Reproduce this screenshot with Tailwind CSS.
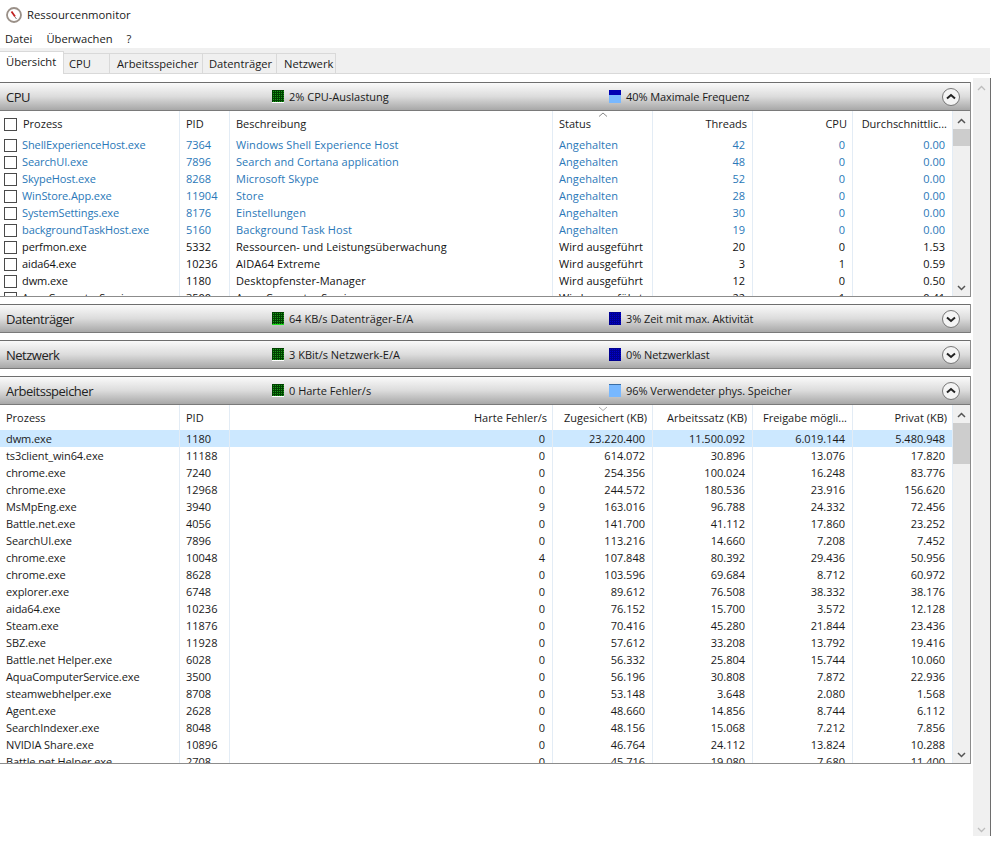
<!DOCTYPE html>
<html lang="de">
<head>
<meta charset="UTF-8">
<title>Ressourcenmonitor</title>
<script src="https://cdn.jsdelivr.net/npm/@tailwindcss/browser@4"></script>
</head>
<body class="bg-white h-[864px] w-[995px] overflow-hidden font-['Open_Sans',sans-serif] text-[11px] text-[#1a1a1a]">
  <!-- title bar -->
  <div class="h-[30px] flex items-center pl-[6px] gap-[5px] text-[11.300px]">
    <svg width="16" height="16" viewBox="0 0 16 16"><circle cx="8" cy="8" r="7" fill="#fff" stroke="#9a9088" stroke-width="1.800"/><path d="M5.500 4.500l3.500 5" stroke="#c02020" stroke-width="1.800"/><path d="M9 10l1.500 2" stroke="#777" stroke-width="1"/></svg>
    <span>Ressourcenmonitor</span>
  </div>
  <!-- menu -->
  <div class="h-[18px] flex items-center pl-[5px] gap-[14px] text-[11.200px] pt-[1px]">
    <span>Datei</span><span>Überwachen</span><span>?</span>
  </div>
  <!-- tabs -->
  <div class="h-[26px] w-[990px] bg-[#f0f0f0] flex items-end border-b border-[#d9d9d9] text-[11.200px]">
    <div class="h-[23px] w-[64px] bg-white border-r border-t border-[#d9d9d9] pl-[6px] pt-[2px] -mb-px">Übersicht</div>
    <div class="h-[20px] w-[46px] border-r border-t border-[#d9d9d9] pl-[5px] pt-[2px]">CPU</div>
    <div class="h-[20px] w-[93px] border-r border-t border-[#d9d9d9] pl-[7px] pt-[2px]">Arbeitsspeicher</div>
    <div class="h-[20px] w-[74px] border-r border-t border-[#d9d9d9] pl-[6px] pt-[2px]">Datenträger</div>
    <div class="h-[20px] w-[59px] border-r border-t border-[#d9d9d9] pl-[7px] pt-[2px]">Netzwerk</div>
  </div>

  <div class="flex h-[762px]">
    <div class="w-[971px] pt-[8px] flex flex-col gap-[7px]">
      <section id="cpu" class="border-r border-b border-[#8c8c8c]"></section>
      <section id="disk" class="border-r border-[#8c8c8c]"></section>
      <section id="net" class="border-r border-[#8c8c8c]"></section>
      <section id="mem" class="border-r border-b border-[#8c8c8c]"></section>
    </div>
    <!-- outer scrollbar -->
    <div class="ml-[2px] mt-[4px] w-[17px] bg-[#f0f0f0] flex flex-col justify-between items-center pb-[3px] pt-[7px]">
      <svg width="9" height="6" viewBox="0 0 9 6"><path d="M1 5l3.500-3.500L8 5" fill="none" stroke="#bdbdbd" stroke-width="1.300"/></svg>
      <svg width="9" height="6" viewBox="0 0 9 6"><path d="M1 1l3.500 3.500L8 1" fill="none" stroke="#bdbdbd" stroke-width="1.300"/></svg>
    </div>
    <div class="w-px mt-[4px] bg-[#6e6e6e]"></div>
  </div>

  <script>
    const up = '<path d="M5 10.500l4-3.500 4 3.500" fill="none" stroke="#222" stroke-width="2"/>';
    const down = '<path d="M5 7.500l4 3.500 4-3.500" fill="none" stroke="#222" stroke-width="2"/>';
    const green = 'bg-[#1a9a1a] bg-[linear-gradient(#004000_1px,transparent_1px),linear-gradient(90deg,#004000_1px,transparent_1px)] bg-[size:2px_2px]';
    const blue = 'bg-[#0000d0] bg-[linear-gradient(#000090_1px,transparent_1px),linear-gradient(90deg,#000090_1px,transparent_1px)] bg-[size:2px_2px]';

    function header(title, left, right, rightClass, open, leftEdge) {
      return `<div class="h-[29px] flex items-center border-t border-[#6e6e6e] bg-gradient-to-b from-[#fafafa] via-[#dcdcdc] to-[#a8a8a8] border-b-[1px] border-b-[#7a7a7a]">
        <div class="w-[272px] pl-[6px] pt-[2px] text-[13px] tracking-[-0.5px] text-[#222]">${title}</div>
        <div class="w-[12px] h-[13px] ${green} border-b ${leftEdge}"></div>
        <div class="w-[325px] pl-[5px] pt-[2px]">${left}</div>
        <div class="w-[12px] h-[13px] ${rightClass}"></div>
        <div class="pl-[5px] pt-[2px] flex-1 tracking-[-0.08px]">${right}</div>
        <svg class="mr-[10px]" width="18" height="18" viewBox="0 0 18 18"><circle cx="9" cy="9" r="8.500" fill="#f4f4f4" stroke="#777"/>${open ? up : down}</svg>
      </div>`;
    }

    const cols = ['w-[180px]', 'w-[50px]', 'w-[323px]', 'w-[100px]', 'w-[100px]', 'w-[100px]', 'w-[100px]'];

    function scrollbar(thumbH) {
      return `<div class="absolute right-0 top-0 bottom-0 w-[17px] bg-[#f0f0f0] z-10">
        <svg class="absolute left-[4px] top-[7px]" width="9" height="6" viewBox="0 0 9 6"><path d="M1 5l3.500-3.500L8 5" fill="none" stroke="#555" stroke-width="1.500"/></svg>
        <div class="absolute left-0 top-[18px] w-[17px] bg-[#cdcdcd]" style="height:${thumbH}px"></div>
        <svg class="absolute left-[4px] bottom-[5px]" width="9" height="6" viewBox="0 0 9 6"><path d="M1 1l3.500 3.500L8 1" fill="none" stroke="#555" stroke-width="1.500"/></svg>
      </div>`;
    }

    const cpuRows = [
      ['ShellExperienceHost.exe','7364','Windows Shell Experience Host','Angehalten','42','0','0.00'],
      ['SearchUI.exe','7896','Search and Cortana application','Angehalten','48','0','0.00'],
      ['SkypeHost.exe','8268','Microsoft Skype','Angehalten','52','0','0.00'],
      ['WinStore.App.exe','11904','Store','Angehalten','28','0','0.00'],
      ['SystemSettings.exe','8176','Einstellungen','Angehalten','30','0','0.00'],
      ['backgroundTaskHost.exe','5160','Background Task Host','Angehalten','19','0','0.00'],
      ['perfmon.exe','5332','Ressourcen- und Leistungsüberwachung','Wird ausgeführt','20','0','1.53'],
      ['aida64.exe','10236','AIDA64 Extreme','Wird ausgeführt','3','1','0.59'],
      ['dwm.exe','1180','Desktopfenster-Manager','Wird ausgeführt','12','0','0.50'],
      ['AquaComputerService.exe','3500','Aqua Computer Service','Wird ausgeführt','22','1','0.41'],
    ];
    const memRows = [
      ['dwm.exe','1180','0','23.220.400','11.500.092','6.019.144','5.480.948'],
      ['ts3client_win64.exe','11188','0','614.072','30.896','13.076','17.820'],
      ['chrome.exe','7240','0','254.356','100.024','16.248','83.776'],
      ['chrome.exe','12968','0','244.572','180.536','23.916','156.620'],
      ['MsMpEng.exe','3940','9','163.016','96.788','24.332','72.456'],
      ['Battle.net.exe','4056','0','141.700','41.112','17.860','23.252'],
      ['SearchUI.exe','7896','0','113.216','14.660','7.208','7.452'],
      ['chrome.exe','10048','4','107.848','80.392','29.436','50.956'],
      ['chrome.exe','8628','0','103.596','69.684','8.712','60.972'],
      ['explorer.exe','6748','0','89.612','76.508','38.332','38.176'],
      ['aida64.exe','10236','0','76.152','15.700','3.572','12.128'],
      ['Steam.exe','11876','0','70.416','45.280','21.844','23.436'],
      ['SBZ.exe','11928','0','57.612','33.208','13.792','19.416'],
      ['Battle.net Helper.exe','6028','0','56.332','25.804','15.744','10.060'],
      ['AquaComputerService.exe','3500','0','56.196','30.808','7.872','22.936'],
      ['steamwebhelper.exe','8708','0','53.148','3.648','2.080','1.568'],
      ['Agent.exe','2628','0','48.660','14.856','8.744','6.112'],
      ['SearchIndexer.exe','8048','0','48.156','15.068','7.212','7.856'],
      ['NVIDIA Share.exe','10896','0','46.764','24.112','13.824','10.288'],
      ['Battle.net Helper.exe','2708','0','45.716','19.080','7.680','11.400'],
    ];

    const box = '<span class="inline-block w-[13px] h-[13px] border border-[#4a4a4a] bg-white shrink-0"></span>';
    const sortUp = '<svg class="absolute left-[598px] top-[1px]" width="10" height="5" viewBox="0 0 10 5"><path d="M1 4.500l4-3.500 4 3.500" fill="none" stroke="#888"/></svg>';
    const sortDown = '<svg class="absolute left-[598px] top-[1px]" width="10" height="5" viewBox="0 0 10 5"><path d="M1 1l4 3.500L9 1" fill="none" stroke="#aaa"/></svg>';

    function cell(width, text, right, extra) {
      const align = right ? 'justify-end pr-[7px]' : 'pl-[6px]';
      return `<div class="${width} ${align} ${extra || ''} border-r border-[#e3ecf5] flex items-center h-full pt-[1px] whitespace-nowrap overflow-hidden">${text}</div>`;
    }

    function cpuTable() {
      const head = ['Prozess','PID','Beschreibung','Status','Threads','CPU','Durchschnittlic...'];
      let html = '<div class="relative h-[185px] overflow-hidden">' + sortUp + scrollbar(17);
      html += '<div class="h-[25px] flex">';
      head.forEach((t, i) => {
        if (i === 0) html += `<div class="${cols[0]} pl-[4px] gap-[6px] pt-[1px] flex items-center border-r border-[#e3ecf5]">${box}${t}</div>`;
        else html += cell(cols[i], t, i > 3).replace('pr-[7px]', 'pr-[5px]');
      });
      html += '</div>';
      cpuRows.forEach((r, n) => {
        const color = n < 6 ? 'text-[#2a78b8]' : 'text-[#111]';
        html += `<div class="h-[17px] flex ${color}">`;
        r.forEach((t, i) => {
          if (i === 0) html += `<div class="${cols[0]} pl-[4px] gap-[5px] pt-[1px] flex items-center border-r border-[#e3ecf5] whitespace-nowrap tracking-[-0.1px]">${box}${t}</div>`;
          else html += cell(cols[i], t, i > 3, i === 2 || i === 3 ? 'tracking-[0.08px]' : '');
        });
        html += '</div>';
      });
      return html + '</div>';
    }

    function memTable() {
      const head = ['Prozess','PID','Harte Fehler/s','Zugesichert (KB)','Arbeitssatz (KB)','Freigabe mögli...','Privat (KB)'];
      let html = '<div class="relative h-[358px] overflow-hidden">' + sortDown + scrollbar(41);
      html += '<div class="h-[25px] flex">';
      head.forEach((t, i) => {
        html += cell(cols[i], t, i > 1).replace('pr-[7px]', 'pr-[5px]');
      });
      html += '</div>';
      memRows.forEach((r, n) => {
        html += `<div class="h-[17px] flex ${n === 0 ? 'bg-[#cce8ff]' : ''}">`;
        r.forEach((t, i) => { html += cell(cols[i], t, i > 1, i === 0 ? 'tracking-[-0.1px]' : ''); });
        html += '</div>';
      });
      return html + '</div>';
    }

    document.getElementById('cpu').innerHTML = header('CPU', '2% CPU-Auslastung', '40% Maximale Frequenz', 'bg-gradient-to-b from-[#0000b4] from-[40%] to-[#78b8ff] to-[40%]', true, 'border-white') + cpuTable();
    document.getElementById('disk').innerHTML = header('Datenträger', '64 KB/s Datenträger-E/A', '3% Zeit mit max. Aktivität', blue, false, 'border-[#20e020]');
    document.getElementById('net').innerHTML = header('Netzwerk', '3 KBit/s Netzwerk-E/A', '0% Netzwerklast', blue, false, 'border-white');
    document.getElementById('mem').innerHTML = header('Arbeitsspeicher', '0 Harte Fehler/s', '96% Verwendeter phys. Speicher', 'bg-[#78b8ff] border-t border-[#3a6ea5]', true, 'border-white') + memTable();
  </script>
</body>
</html>
